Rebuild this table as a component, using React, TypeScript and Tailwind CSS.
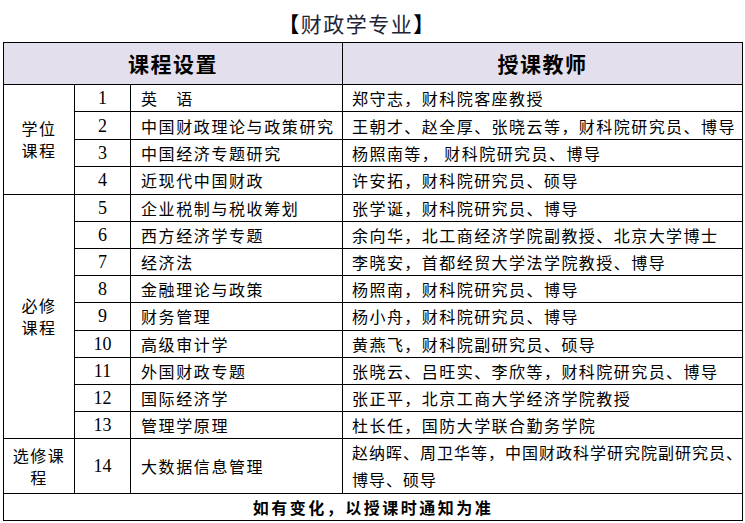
import React from 'react';

const FONT = "font-['Noto_Sans_CJK_SC','Noto_Sans',sans-serif]";

type Row = { no: number; course: string; teacher: React.ReactNode };

const degreeRows: Row[] = [
  { no: 1, course: '英　语', teacher: '郑守志，财科院客座教授' },
  { no: 2, course: '中国财政理论与政策研究', teacher: '王朝才、赵全厚、张晓云等，财科院研究员、博导' },
  { no: 3, course: '中国经济专题研究', teacher: '杨照南等， 财科院研究员、博导' },
  { no: 4, course: '近现代中国财政', teacher: '许安拓，财科院研究员、硕导' },
];

const requiredRows: Row[] = [
  { no: 5, course: '企业税制与税收筹划', teacher: '张学诞，财科院研究员、博导' },
  { no: 6, course: '西方经济学专题', teacher: '余向华，北工商经济学院副教授、北京大学博士' },
  { no: 7, course: '经济法', teacher: '李晓安，首都经贸大学法学院教授、博导' },
  { no: 8, course: '金融理论与政策', teacher: '杨照南，财科院研究员、博导' },
  { no: 9, course: '财务管理', teacher: '杨小舟，财科院研究员、博导' },
  { no: 10, course: '高级审计学', teacher: '黄燕飞，财科院副研究员、硕导' },
  { no: 11, course: '外国财政专题', teacher: '张晓云、吕旺实、李欣等，财科院研究员、博导' },
  { no: 12, course: '国际经济学', teacher: '张正平，北京工商大学经济学院教授' },
  { no: 13, course: '管理学原理', teacher: '杜长任，国防大学联合勤务学院' },
];

const cell = 'border border-black p-0 align-middle';

function CourseCells({ row }: { row: Row }) {
  return (
    <>
      <td className={`${cell} text-center font-['Liberation_Serif',serif] text-[18px] leading-none`}>{row.no}</td>
      <td className={`${cell} pl-[10px] text-[16px] tracking-[1.6px] whitespace-nowrap`}>{row.course}</td>
      <td className={`${cell} pl-[9px] text-[16px] tracking-[1.45px] whitespace-nowrap`}>{row.teacher}</td>
    </>
  );
}

function Category({ lines, span }: { lines: string[]; span: number }) {
  return (
    <td rowSpan={span} className={`${cell} text-center text-[16px] tracking-[1.5px] leading-[22px]`}>
      {lines.map((l) => (
        <div key={l}>{l}</div>
      ))}
    </td>
  );
}

export default function App() {
  return (
    <div className={`w-[745px] h-[523px] bg-white text-black ${FONT} [text-spacing-trim:space-all] pl-[3px] overflow-hidden`}>
      <div className="h-[42px] flex items-center justify-center mr-[34px] pt-[6px]">
        <span className="text-[21px] tracking-[1.5px] text-[#1e2436]">
          <span className="font-bold text-black">【</span>财政学专业<span className="font-bold text-black">】</span>
        </span>
      </div>
      <table className="border-collapse table-fixed w-[739px]">
        <colgroup>
          <col className="w-[71px]" />
          <col className="w-[56px]" />
          <col className="w-[212px]" />
          <col className="w-[400px]" />
        </colgroup>
        <tbody>
          <tr className="h-[42px] bg-[#e4dfec]">
            <td colSpan={3} className={`${cell} text-center text-[21px] font-bold tracking-[1.5px]`}>课程设置</td>
            <td className={`${cell} text-center text-[21px] font-bold tracking-[1.5px]`}>授课教师</td>
          </tr>
          {degreeRows.map((row, i) => (
            <tr key={row.no} className="h-[27.4px]">
              {i === 0 && <Category lines={['学位', '课程']} span={4} />}
              <CourseCells row={row} />
            </tr>
          ))}
          {requiredRows.map((row, i) => (
            <tr key={row.no} className="h-[27.2px]">
              {i === 0 && <Category lines={['必修', '课程']} span={9} />}
              <CourseCells row={row} />
            </tr>
          ))}
          <tr className="h-[54.6px]">
            <Category lines={['选修课', '程']} span={1} />
            <td className={`${cell} text-center font-['Liberation_Serif',serif] text-[18px] leading-none`}>14</td>
            <td className={`${cell} pl-[10px] text-[16px] tracking-[1.6px] whitespace-nowrap`}>大数据信息管理</td>
            <td className={`${cell} pl-[9px] text-[16px] tracking-[1px] leading-[27px] whitespace-nowrap`}>
              赵纳晖、周卫华等，中国财政科学研究院副研究员、
              <br />
              博导、硕导
            </td>
          </tr>
          <tr className="h-[27px]">
            <td colSpan={4} className={`${cell} text-center text-[16px] font-bold tracking-[2.5px]`}>
              如有变化，以授课时通知为准
            </td>
          </tr>
        </tbody>
      </table>
    </div>
  );
}
